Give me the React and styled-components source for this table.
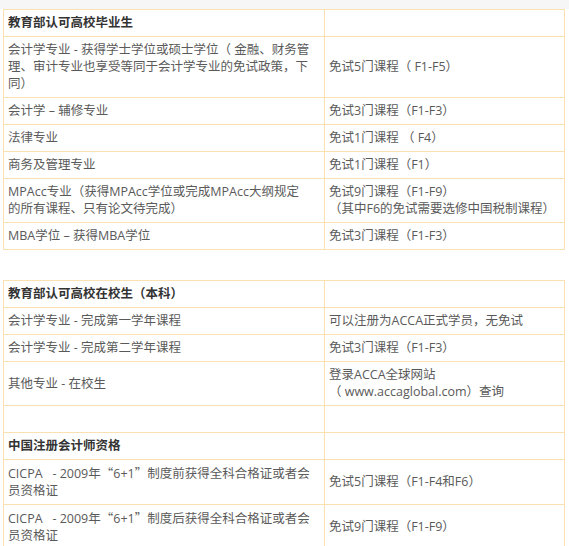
import React from "react";
import styled, { createGlobalStyle } from "styled-components";

const Global = createGlobalStyle`
  html, body { margin: 0; padding: 0; background: #ffffff; }
  body { font-family: "Open Sans", "Noto Sans CJK SC", sans-serif; }
`;

const TopStrip = styled.div`
  height: 9px;
  background: #f6f6f6;
`;

const Page = styled.div`
  padding: 0 0 0 3px;
  display: flex;
  flex-direction: column;
  gap: 30px;
`;

const Table = styled.table`
  border-collapse: collapse;
  width: 561px;
  table-layout: fixed;
`;

const Cell = styled.td`
  border: 1px solid #fbe0b2;
  padding: 4px 4px 5px;
  font-family: "Open Sans", "Noto Sans CJK SC", sans-serif;
  font-size: 12.5px;
  line-height: 17px;
  vertical-align: middle;
  color: ${(p) => (p.$head ? "#333333" : "#5a5a5a")};
  font-weight: ${(p) => (p.$head ? 700 : 400)};
  white-space: nowrap;
  overflow: hidden;
`;

const Lines = styled.div`
  line-height: 17px;
  min-height: 17px;
`;

const Cjk = styled.span`
  font-family: "Noto Sans CJK SC", sans-serif;
  line-height: 17px;
`;

const LeftCol = styled.col`
  width: 321px;
`;
const RightCol = styled.col`
  width: 240px;
`;

const Row = ({ left, right, head }) => (
  <tr>
    <Cell $head={head}>
      <Lines>{left}</Lines>
    </Cell>
    <Cell>
      <Lines>{right}</Lines>
    </Cell>
  </tr>
);

const table1 = [
  { head: true, left: "教育部认可高校毕业生", right: "" },
  {
    left: (
      <>
        会计学专业 - 获得学士学位或硕士学位（ 金融、财务管
        <br />
        理、审计专业也享受等同于会计学专业的免试政策，下
        <br />
        同）
      </>
    ),
    right: "免试5门课程（ F1-F5）",
  },
  { left: "会计学 – 辅修专业", right: "免试3门课程（F1-F3）" },
  { left: "法律专业", right: "免试1门课程 （ F4）" },
  { left: "商务及管理专业", right: "免试1门课程（F1）" },
  {
    left: (
      <>
        MPAcc专业（获得MPAcc学位或完成MPAcc大纲规定
        <br />
        的所有课程、只有论文待完成）
      </>
    ),
    right: (
      <>
        免试9门课程（F1-F9）
        <br />
        （其中F6的免试需要选修中国税制课程）
      </>
    ),
  },
  { left: "MBA学位 – 获得MBA学位", right: "免试3门课程（F1-F3）" },
];

const table2 = [
  { head: true, left: "教育部认可高校在校生（本科）", right: "" },
  { left: "会计学专业 - 完成第一学年课程", right: "可以注册为ACCA正式学员，无免试" },
  { left: "会计学专业 - 完成第二学年课程", right: "免试3门课程（F1-F3）" },
  {
    left: "其他专业 - 在校生",
    right: (
      <>
        登录ACCA全球网站
        <br />（ www.accaglobal.com）查询
      </>
    ),
  },
  { left: "", right: "" },
  { head: true, left: "中国注册会计师资格", right: "" },
  {
    left: (
      <>
        CICPA&nbsp;&nbsp; - 2009年<Cjk>“</Cjk>6+1<Cjk>”</Cjk>制度前获得全科合格证或者会
        <br />
        员资格证
      </>
    ),
    right: "免试5门课程（F1-F4和F6）",
  },
  {
    left: (
      <>
        CICPA&nbsp;&nbsp; - 2009年<Cjk>“</Cjk>6+1<Cjk>”</Cjk>制度后获得全科合格证或者会
        <br />
        员资格证
      </>
    ),
    right: "免试9门课程（F1-F9）",
  },
];

const ExemptionTable = ({ rows }) => (
  <Table>
    <colgroup>
      <LeftCol />
      <RightCol />
    </colgroup>
    <tbody>
      {rows.map((r, i) => (
        <Row key={i} {...r} />
      ))}
    </tbody>
  </Table>
);

export default function App() {
  return (
    <>
      <Global />
      <TopStrip />
      <Page>
        <ExemptionTable rows={table1} />
        <ExemptionTable rows={table2} />
      </Page>
    </>
  );
}
